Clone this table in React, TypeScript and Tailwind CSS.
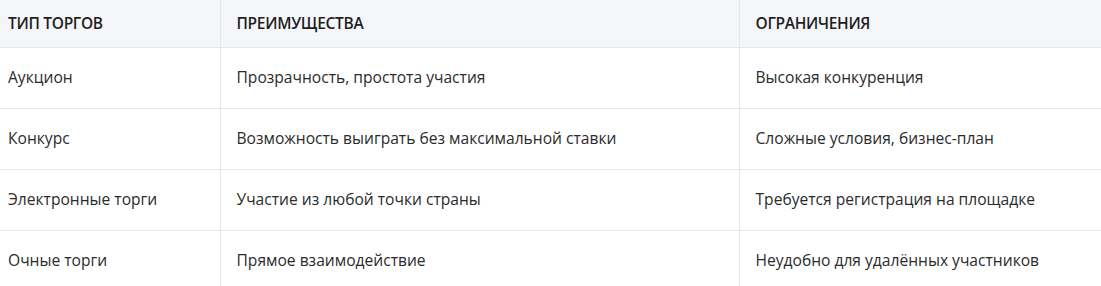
const rows = [
  ['Аукцион', 'Прозрачность, простота участия', 'Высокая конкуренция'],
  ['Конкурс', 'Возможность выиграть без максимальной ставки', 'Сложные условия, бизнес-план'],
  ['Электронные торги', 'Участие из любой точки страны', 'Требуется регистрация на площадке'],
  ['Очные торги', 'Прямое взаимодействие', 'Неудобно для удалённых участников'],
]

export default function App() {
  return (
    <div className="w-[1101px] h-[286px] overflow-hidden bg-white text-[#2b2b2b] font-['Open_Sans',sans-serif]">
      <table className="w-full border-collapse table-fixed">
        <colgroup>
          <col className="w-[220px]" />
          <col className="w-[519px]" />
          <col />
        </colgroup>
        <thead>
          <tr className="h-[47px] bg-[#f5f6fa] border-b border-[#e5e7ef]">
            <th className="pl-2 text-left text-[15.5px] font-semibold tracking-[-0.3px] text-[#1f1f1f] border-r border-[#e5e7ef]">ТИП ТОРГОВ</th>
            <th className="pl-4 text-left text-[15.5px] font-semibold tracking-[-0.3px] text-[#1f1f1f] border-r border-[#e5e7ef]">ПРЕИМУЩЕСТВА</th>
            <th className="pl-4 text-left text-[15.5px] font-semibold tracking-[-0.3px] text-[#1f1f1f]">ОГРАНИЧЕНИЯ</th>
          </tr>
        </thead>
        <tbody>
          {rows.map((r) => (
            <tr key={r[0]} className="h-[61px] border-b border-[#e5e7ef] text-[15.6px]">
              <td className="pl-2 border-r border-[#e5e7ef]">{r[0]}</td>
              <td className="pl-4 border-r border-[#e5e7ef]">{r[1]}</td>
              <td className="pl-4">{r[2]}</td>
            </tr>
          ))}
        </tbody>
      </table>
    </div>
  )
}
